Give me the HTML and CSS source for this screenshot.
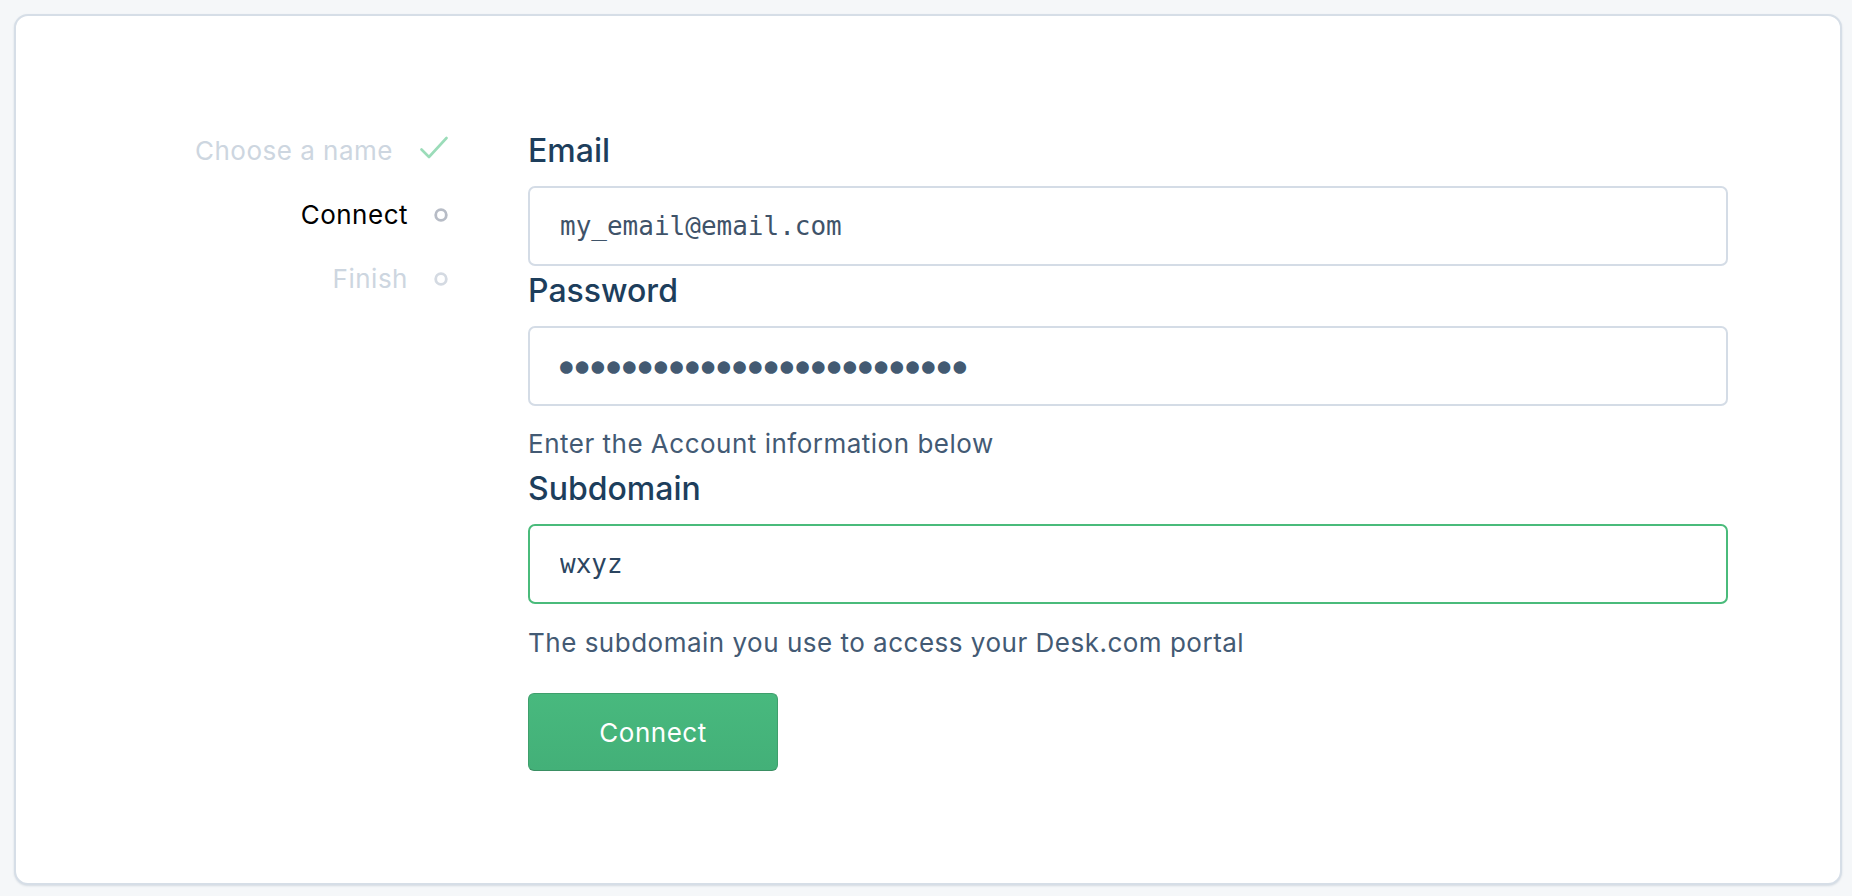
FILE: index.html
```html
<!DOCTYPE html>
<html lang="en">
<head>
<meta charset="utf-8">
<title>Connect</title>
<link rel="stylesheet" href="styles.css">
</head>
<body>
<div class="card">
  <ul class="steps">
    <li class="step step-done">
      <span class="step-text">Choose a name</span>
      <span class="step-icon">
        <svg width="28" height="24" viewBox="0 0 28 24"><polyline points="1.5,13.5 9,21 26.5,2" fill="none" stroke="#9bdcb9" stroke-width="2.6" stroke-linecap="round" stroke-linejoin="round"/></svg>
      </span>
    </li>
    <li class="step step-current">
      <span class="step-text">Connect</span>
      <span class="step-icon">
        <svg width="14" height="14" viewBox="0 0 14 14"><circle cx="7" cy="7" r="5.3" fill="none" stroke="#b7bcc6" stroke-width="2.8"/></svg>
      </span>
    </li>
    <li class="step step-todo">
      <span class="step-text">Finish</span>
      <span class="step-icon">
        <svg width="14" height="14" viewBox="0 0 14 14"><circle cx="7" cy="7" r="5.3" fill="none" stroke="#d4dae2" stroke-width="2.8"/></svg>
      </span>
    </li>
  </ul>
  <form class="form">
    <label class="label" for="email">Email</label>
    <input class="input" id="email" type="text" value="my_email@email.com">
    <label class="label label-next" for="password">Password</label>
    <div class="input input-password" id="password">●●●●●●●●●●●●●●●●●●●●●●●●●●</div>
    <p class="help">Enter the Account information below</p>
    <label class="label" for="subdomain">Subdomain</label>
    <input class="input input-focus" id="subdomain" type="text" value="wxyz">
    <p class="help help-bottom">The subdomain you use to access your Desk.com portal</p>
    <button class="button" type="button">Connect</button>
  </form>
</div>
</body>
</html>
```

FILE: styles.css
```css
* { box-sizing: border-box; }

html, body {
  margin: 0;
  padding: 0;
  background: #f5f7f9;
}

body {
  padding: 14px 10px 0 14px;
  font-family: Inter, "Noto Sans", "Liberation Sans", sans-serif;
  height: 896px;
  overflow: hidden;
}

.card {
  display: flex;
  align-items: flex-start;
  width: 1828px;
  height: 871px;
  background: #ffffff;
  border: 2px solid #d6dee7;
  border-radius: 14px;
  box-shadow: 0 1px 2px rgba(120, 140, 160, 0.25);
  padding: 103px 112px 0 172px;
}

.steps {
  list-style: none;
  margin: 0;
  padding: 0;
  width: 260px;
  flex: none;
}

.step {
  display: flex;
  justify-content: flex-end;
  align-items: center;
  height: 64px;
  font-size: 26px;
  line-height: 64px;
  letter-spacing: 0.5px;
}

.step-text { white-space: nowrap; }

.step-icon {
  width: 40px;
  display: flex;
  justify-content: flex-end;
  align-items: center;
}

.step-done .step-text { color: #cdd6e0; margin-right: 15px; }
.step-done .step-icon { margin-top: -6px; }
.step-current .step-text { color: #000000; }
.step-todo .step-text { color: #cdd6e0; }

.form {
  flex: 1;
  margin: 12px 0 0 80px;
  display: flex;
  flex-direction: column;
  align-items: flex-start;
}

.label {
  font-size: 32px;
  line-height: 40px;
  font-weight: 500;
  color: #1d3e5c;
  margin-bottom: 15px;
}

.label-next { margin-top: 5px; }

.input {
  width: 100%;
  height: 80px;
  border: 2px solid #d4dce6;
  border-radius: 7px;
  padding: 0 30px;
  font-family: "DejaVu Sans Mono", "Liberation Mono", monospace;
  font-size: 26px;
  color: #3f5369;
  background: #ffffff;
  outline: none;
  display: flex;
  align-items: center;
}

.input-password {
  color: #435a72;
  font-size: 21px;
  letter-spacing: 3.1px;
}

.input-focus {
  border-color: #4abb7b;
  color: #2b4560;
}

.help {
  margin: 20px 0 7px;
  font-size: 26px;
  line-height: 36px;
  letter-spacing: 0.5px;
  color: #435a74;
}

.help-bottom { margin: 21px 0 32px; }

.button {
  width: 250px;
  height: 78px;
  border: 1px solid #3f9f6c;
  border-bottom-color: #3a8f63;
  border-radius: 6px;
  background: linear-gradient(#48b97e, #43b078);
  color: #ffffff;
  font-family: Inter, "Noto Sans", "Liberation Sans", sans-serif;
  font-size: 26px;
  letter-spacing: 0.5px;
  padding: 0;
}
```
